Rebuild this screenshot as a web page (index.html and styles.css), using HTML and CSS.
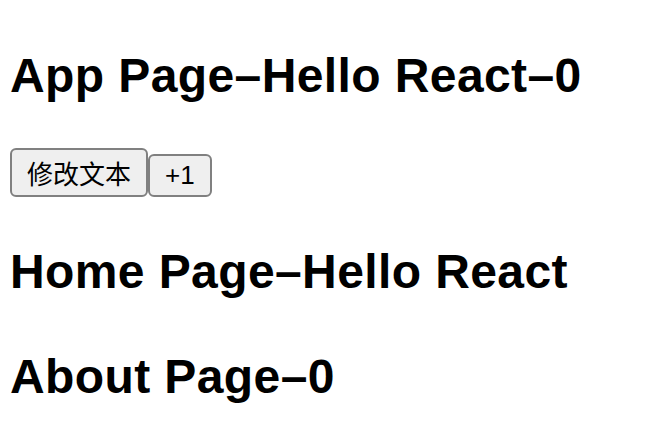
FILE: index.html
```html
<!DOCTYPE html>
<html lang="zh-CN">
<head>
<meta charset="utf-8">
<title>App</title>
<link rel="stylesheet" href="styles.css">
</head>
<body>
<div class="app">
  <h2 class="title">App Page–Hello React–0</h2>
  <div class="actions"><button class="btn">修改文本</button><button class="btn">+1</button></div>
  <h2 class="title">Home Page–Hello React</h2>
  <h2 class="title">About Page–0</h2>
</div>
</body>
</html>
```

FILE: styles.css
```css
html, body {
  margin: 0;
  padding: 0;
  background: #ffffff;
}

body {
  font-family: "Liberation Sans", "Noto Sans CJK SC", sans-serif;
  color: #000000;
}

.app {
  padding: 43px 10px 0 10px;
}

.title {
  font-family: "Liberation Sans", "Noto Sans CJK SC", sans-serif;
  font-size: 48px;
  font-weight: bold;
  line-height: 65px;
  letter-spacing: 0.4px;
  margin: 40px 0;
  white-space: nowrap;
}

.app > .title:first-child {
  margin-top: 0;
}

.actions {
  display: flex;
  align-items: baseline;
  padding-bottom: 2px;
}

.btn {
  font-family: "Liberation Sans", "Noto Sans CJK SC", sans-serif;
  font-size: 26px;
  color: #000000;
  background: #efefef;
  border: 2px solid #808080;
  border-radius: 6px;
  padding: 4px 15px;
  margin: 0;
}
```
